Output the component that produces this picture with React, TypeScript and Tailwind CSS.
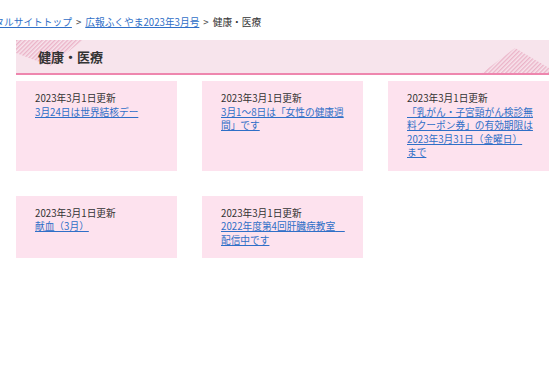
import React from "react";

type Card = { date: string; title: React.ReactNode };

const cards: Card[] = [
  { date: "2023年3月1日更新", title: "3月24日は世界結核デー" },
  { date: "2023年3月1日更新", title: "3月1～8日は「女性の健康週間」です" },
  {
    date: "2023年3月1日更新",
    title: (
      <>
        「乳がん・子宮頸がん検診無料クーポン券」の有効期限は2023年3月31日（金曜日）<span className="whitespace-nowrap">まで</span>
      </>
    ),
  },
  { date: "2023年3月1日更新", title: "献血（3月）" },
  { date: "2023年3月1日更新", title: "2022年度第4回肝臓病教室\u3000配信中です" },
];

function Hatch() {
  return (
    <svg className="absolute inset-0 pointer-events-none" width="533" height="33" viewBox="0 0 533 33">
      <defs>
        <pattern id="stripes" width="3" height="3" patternUnits="userSpaceOnUse" patternTransform="rotate(45)">
          <rect width="1.4" height="3" fill="#ebb3c8" />
        </pattern>
      </defs>
      <polygon points="0,0 67,0 34,26 0,13" fill="url(#stripes)" />
      <polygon points="466,33 499,8 533,28 533,33" fill="url(#stripes)" />
    </svg>
  );
}

export default function App() {
  return (
    <div
      className="w-[554px] h-[380px] overflow-hidden bg-white text-[#333333]"
      style={{ fontFamily: '"Noto Sans CJK JP", "Noto Sans", sans-serif' }}
    >
      <div className="pt-[15px] ml-[-25px] text-[9.7px] leading-[14px] whitespace-nowrap">
        <a href="#" className="text-[#2f6fc7] underline">ポータルサイトトップ</a>
        <span className="mx-[4px] text-[#555]">&gt;</span>
        <a href="#" className="text-[#2f6fc7] underline">広報ふくやま2023年3月号</a>
        <span className="mx-[4px] text-[#555]">&gt;</span>
        <span>健康・医療</span>
      </div>

      <div className="ml-[16px] w-[533px] mt-[11px]">
        <div className="relative h-[35px] bg-[#f7e4ec] border-b-2 border-[#ee86ae] flex items-center">
          <Hatch />
          <h1 className="relative pl-[22px] text-[13px] font-bold text-[#333]">健康・医療</h1>
        </div>

        <div className="mt-[6px] grid grid-cols-3 gap-[25px]">
          {cards.map((c, i) => (
            <div key={i} className="bg-[#fde2ee] pt-[11px] pb-[11px] pl-[19px] pr-[13px] text-[9.7px] leading-[13.5px]">
              <div className="text-[#333]">{c.date}</div>
              <a href="#" className="text-[#2f6fc7] underline">{c.title}</a>
            </div>
          ))}
        </div>
      </div>
    </div>
  );
}
